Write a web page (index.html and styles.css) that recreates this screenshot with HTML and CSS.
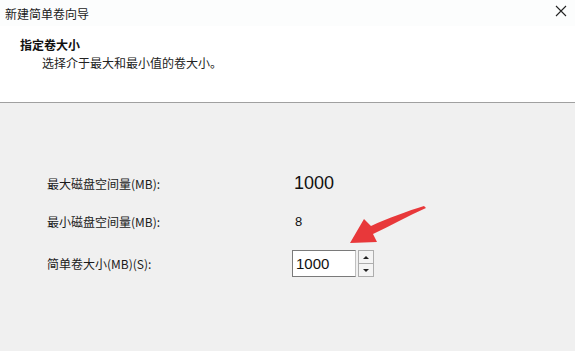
FILE: index.html
```html
<!DOCTYPE html>
<html lang="zh-CN">
<head>
  <meta charset="UTF-8">
  <title>新建简单卷向导</title>
  <link rel="stylesheet" href="styles.css">
</head>
<body>
  <div class="wizard">
    <div class="title-bar">
      <span class="title-text">新建简单卷向导</span>
      <span class="close-btn">
        <svg width="12" height="12" viewBox="0 0 12 12"><path d="M1 1 L11 11 M11 1 L1 11" stroke="#222" stroke-width="1.1" fill="none"/></svg>
      </span>
    </div>

    <div class="wizard-header">
      <div class="step-title">指定卷大小</div>
      <div class="step-desc">选择介于最大和最小值的卷大小。</div>
    </div>

    <div class="wizard-body">
      <div class="size-row">
        <span class="size-label">最大磁盘空间量(MB):</span>
        <span class="size-value big">1000</span>
      </div>
      <div class="size-row">
        <span class="size-label">最小磁盘空间量(MB):</span>
        <span class="size-value">8</span>
      </div>
      <div class="size-row size-row-input">
        <span class="size-label">简单卷大小(MB)(S):</span>
        <div class="spin-box">
          <div class="spin-input">1000</div>
          <div class="spin-buttons">
            <div class="spin-btn"><span class="tri-up"></span></div>
            <div class="spin-btn"><span class="tri-down"></span></div>
          </div>
        </div>
      </div>

      <!-- 红色标注箭头 -->
      <svg class="mark-arrow" width="90" height="50" viewBox="0 0 90 50">
        <path d="M84 7 C68 12 48 19 31 27 L24 20 L10 44 L37 43 L33 35 C50 27 68 17 86 9 Z" fill="#e8383a"/>
      </svg>
    </div>
  </div>
</body>
</html>
```

FILE: styles.css
```css
body {
  margin: 0;
  font-family: "Noto Sans CJK SC", "Noto Sans", sans-serif;
  font-size: 12px;
  color: #111;
  background: #f0f0f0;
}
.wizard {
  width: 575px;
  height: 351px;
  display: flex;
  flex-direction: column;
  overflow: hidden;
}
.title-bar {
  height: 26px;
  display: flex;
  align-items: center;
  justify-content: space-between;
  padding: 0 6px 0 5px;
  background: #fcfdfd;
}
.title-text {
  font-size: 12px;
  color: #1a1a1a;
}
.close-btn {
  display: flex;
  width: 16px;
  height: 16px;
  align-items: center;
  justify-content: center;
  margin-top: -4px;
}
.wizard-header {
  height: 77px;
  background: #ffffff;
  border-bottom: 1px solid #a0a0a0;
  padding: 9px 0 0 20px;
  box-sizing: border-box;
}
.step-title {
  font-weight: bold;
  line-height: 20px;
}
.step-desc {
  padding-left: 22px;
  line-height: 16px;
  color: #222;
}
.wizard-body {
  flex: 1;
  position: relative;
  padding: 68px 0 0 47px;
}
.size-row {
  display: flex;
  align-items: center;
  height: 24px;
  margin-bottom: 14px;
}
.size-row:nth-child(2) {
  margin-bottom: 16px;
}
.size-row-input {
  height: 29px;
}
.size-label {
  width: 245px;
  color: #1a1a1a;
}
.size-value {
  padding-left: 3px;
  font-family: "Liberation Sans", Arial, sans-serif;
  font-size: 13px;
}
.size-value.big {
  padding-left: 2px;
  font-size: 18px;
}
.spin-box {
  display: flex;
  align-items: center;
}
.spin-input {
  width: 59px;
  height: 25px;
  border: 1px solid #7a7a7a;
  border-right-color: #c0c0c0;
  background: #ffffff;
  font-family: "Liberation Sans", Arial, sans-serif;
  font-size: 15px;
  line-height: 25px;
  padding-left: 3px;
}
.spin-buttons {
  width: 14px;
  height: 25px;
  margin-left: 2px;
  border: 1px solid #adadad;
  display: flex;
  flex-direction: column;
  background: #f4f4f4;
}
.spin-btn {
  flex: 1;
  display: flex;
  align-items: center;
  justify-content: center;
}
.spin-btn + .spin-btn {
  border-top: 1px solid #adadad;
}
.tri-up {
  border-left: 3px solid transparent;
  border-right: 3px solid transparent;
  border-bottom: 3px solid #222;
}
.tri-down {
  border-left: 3px solid transparent;
  border-right: 3px solid transparent;
  border-top: 3px solid #222;
}
.mark-arrow {
  position: absolute;
  left: 340px;
  top: 96px;
}
```
